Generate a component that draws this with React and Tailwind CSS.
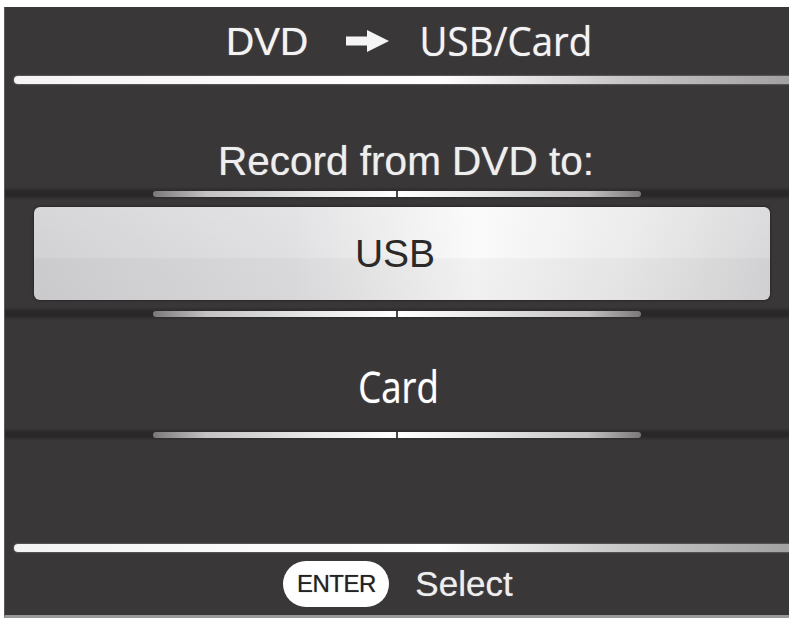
import React from "react"

const arial = { fontFamily: '"Liberation Sans", Arial, sans-serif' }
const humanist = { fontFamily: '"Open Sans", "Noto Sans", sans-serif' }

function Glow() {
    // the soft separator under a row: darker band with a bright bar fading out to both ends
    return (
        <div className="h-[13px] w-full flex items-center justify-center bg-[linear-gradient(to_bottom,#3a3738_0%,#2a2728_35%,#2a2728_65%,#3a3738_100%)]">
            <div className="flex h-[6px] w-[488px]">
                <div className="flex-1 rounded-l-full bg-[linear-gradient(to_right,#7a7879_0%,#c4c2c3_22%,#e8e8e8_65%,#ffffff_100%)]" />
                <div className="w-[2px] bg-[#4a4748]" />
                <div className="flex-1 rounded-r-full bg-[linear-gradient(to_right,#ffffff_0%,#e8e8e8_35%,#c4c2c3_78%,#7a7879_100%)]" />
            </div>
        </div>
    )
}

function Rule() {
    return (
        <div className="h-[9px] flex items-center pl-[9px]">
            <div className="h-[8px] w-full rounded-l-full bg-[linear-gradient(to_right,#f4f4f4_0%,#ffffff_55%,#c8c8c8_78%,#a2a2a2_100%)] shadow-[0_0_2px_rgba(255,255,255,0.5)]" />
        </div>
    )
}

export default function App() {
    return (
        <div className="w-[789px] h-[618px] bg-white pt-[7px] pl-[4px] overflow-hidden">
            <div className="h-[611px] bg-[#3a3738] border-l border-[#5a5859] border-b-[3px] border-b-[#9a9899] flex flex-col">
                {/* Title */}
                <div className="h-[68px] flex items-center justify-center text-[#f3f3f3] [text-shadow:0_0_1px_rgba(255,255,255,0.7)] pl-[28px]">
                    <span className="text-[39px] leading-none" style={arial}>DVD</span>
                    <svg width="43" height="22" viewBox="0 0 43 22" className="ml-[38px] mr-[30px]">
                        <path d="M0 6.5 H21 V0 L43 11 L21 22 V15.5 H0 Z" fill="#f5f5f5" />
                    </svg>
                    <span className="text-[40px] leading-none inline-block scale-x-[0.96] -ml-[3px]" style={humanist}>USB/Card</span>
                </div>

                <Rule />

                <div className="h-[103px] pt-[57px] text-center text-[#eeeeee] text-[40.5px] leading-[40px] [text-shadow:0_0_1px_rgba(255,255,255,0.6)] pl-[18px]" style={arial}>
                    Record from DVD to:
                </div>

                <Glow />

                <div className="h-[7px]" />

                {/* Selected option */}
                <div className="h-[93px] ml-[29px] mr-[19px] rounded-md flex items-center justify-center bg-[linear-gradient(to_bottom,rgba(255,255,255,0.1)_0%,rgba(255,255,255,0)_54%,rgba(0,0,0,0.03)_56%,rgba(0,0,0,0.04)_100%),linear-gradient(to_right,#d2d2d4_0%,#e0e0e2_35%,#fafafa_60%,#ececec_80%,#d8d8da_100%)] shadow-[0_0_3px_rgba(0,0,0,0.6)]">
                    <span className="text-[39px] leading-none text-[#2a2a2a] -ml-[14px]" style={arial}>USB</span>
                </div>

                <div className="h-[7px]" />

                <Glow />

                <div className="h-[108px] pt-[44px] flex justify-center pl-[4px]">
                    <span className="text-[44px] leading-[44px] text-white inline-block scale-x-[0.83] [text-shadow:0_0_1px_rgba(255,255,255,0.7)]" style={humanist}>Card</span>
                </div>

                <Glow />

                <div className="h-[102px]" />

                <Rule />

                {/* Footer hint */}
                <div className="h-[63px] flex items-center justify-center pl-[2px]">
                    <span className="w-[106px] h-[46px] rounded-full bg-white flex items-center justify-center text-[24px] text-[#222222] tracking-[-0.5px] [text-shadow:0_0_1px_rgba(0,0,0,0.5)]" style={arial}>
                        ENTER
                    </span>
                    <span className="ml-[26px] text-[35px] leading-none text-[#eeeeee] [text-shadow:0_0_1px_rgba(255,255,255,0.6)]" style={arial}>Select</span>
                </div>
            </div>
        </div>
    )
}
